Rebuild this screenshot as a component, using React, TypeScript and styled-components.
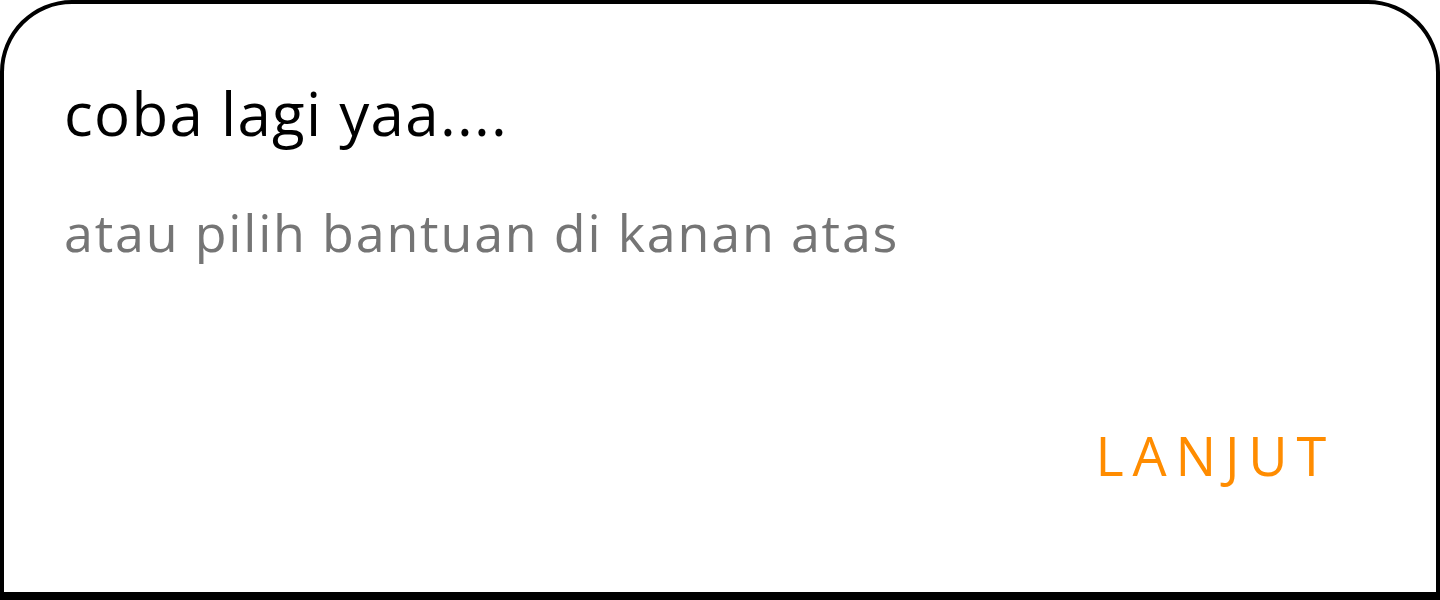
import React from "react";
import styled, { createGlobalStyle } from "styled-components";

const GlobalStyle = createGlobalStyle`
  html, body { margin: 0; padding: 0; background: #ffffff; }
  body { font-family: "Open Sans", "Noto Sans", sans-serif; }
  * { box-sizing: border-box; }
`;

const Card = styled.div`
  width: 1440px;
  height: 600px;
  background: #ffffff;
  border: 4px solid #000000;
  border-bottom-width: 8px;
  border-radius: 72px 72px 0 0;
  display: flex;
  flex-direction: column;
  padding: 73px 60px 0 60px;
`;

const Title = styled.h1`
  margin: 0;
  font-family: "Open Sans", "Noto Sans", sans-serif;
  font-weight: 400;
  font-size: 60px;
  line-height: 72px;
  letter-spacing: 1.3px;
  color: #000000;
`;

const Subtitle = styled.p`
  margin: 51px 0 0 0;
  font-family: "Open Sans", "Noto Sans", sans-serif;
  font-weight: 400;
  font-size: 52px;
  line-height: 64px;
  letter-spacing: 1.8px;
  color: #757575;
`;

const Actions = styled.div`
  margin-top: auto;
  margin-bottom: 105px;
  display: flex;
  justify-content: flex-end;
  padding-right: 41px;
`;

const TextButton = styled.button`
  background: none;
  border: none;
  padding: 0;
  font-family: "Open Sans", "Noto Sans", sans-serif;
  font-weight: 400;
  font-size: 54px;
  letter-spacing: 8.8px;
  line-height: 64px;
  color: #ff8c00;
  cursor: pointer;
`;

export default function App() {
  return (
    <>
      <GlobalStyle />
      <Card>
        <Title>coba lagi yaa....</Title>
        <Subtitle>atau pilih bantuan di kanan atas</Subtitle>
        <Actions>
          <TextButton>LANJUT</TextButton>
        </Actions>
      </Card>
    </>
  );
}
